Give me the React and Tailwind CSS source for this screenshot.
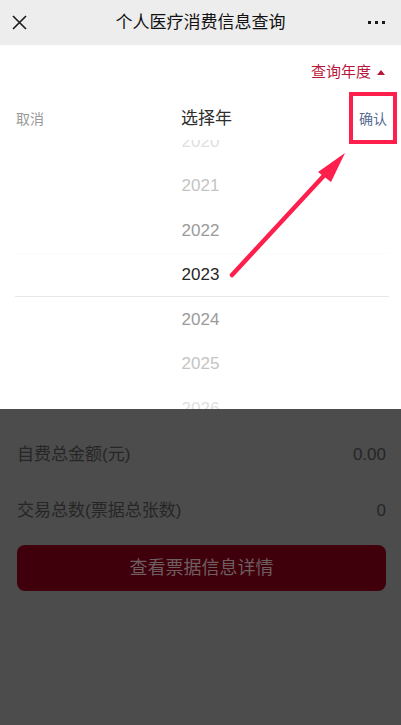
import { useState } from "react";

const years = [2020, 2021, 2022, 2023, 2024, 2025, 2026];

const yearColor = {
    0: "text-[#e0e0e0]",
    1: "text-[#c4c4c4]",
    2: "text-[#9a9a9a]",
    3: "text-[#262626]",
};

export default function App() {

    const [selected] = useState(2023);

    const selectedIndex = years.indexOf(selected);

    return (
        <div
            className="relative w-[401px] h-[725px] overflow-hidden bg-[#4c4c4c]"
            style={{ fontFamily: '"Liberation Sans", "Noto Sans CJK SC", sans-serif' }}
        >

            {/* top bar */}
            <div className="h-[45px] bg-[#ededed] flex items-center justify-between px-[12px]">
                <svg width="15" height="15" viewBox="0 0 15 15">
                    <path d="M1 1 L14 14 M14 1 L1 14" stroke="#1a1a1a" strokeWidth="1.6" />
                </svg>
                <div className="text-[17px] text-[#111] ml-[6px]">
                    个人医疗消费信息查询
                </div>
                <div className="flex items-center gap-[4px] pr-[4px]">
                    <span className="w-[3px] h-[3px] bg-[#1a1a1a]" />
                    <span className="w-[3px] h-[3px] bg-[#1a1a1a]" />
                    <span className="w-[3px] h-[3px] bg-[#1a1a1a]" />
                </div>
            </div>

            {/* white panel with picker */}
            <div className="bg-white h-[364px]">

                <div className="h-[53px] flex items-center justify-end pr-[16px] pt-[2px]">
                    <span className="text-[15px] text-[#b8173b]">查询年度</span>
                    <span className="ml-[6px] w-0 h-0 border-l-[4px] border-r-[4px] border-b-[5px] border-l-transparent border-r-transparent border-b-[#b8173b]" />
                </div>

                <div className="h-[42px] flex items-center justify-between px-[16px]">
                    <span className="text-[14px] text-[#999]">取消</span>
                    <span className="text-[17px] text-[#2e2e2e] ml-[10px]">选择年</span>
                    <span className="text-[14px] text-[#576b95] mr-[-2px]">确认</span>
                </div>

                <div className="relative h-[269px] overflow-hidden">
                    <div className="-mt-[21px]">
                        {years.map((y, i) => {
                            const d = Math.min(Math.abs(i - selectedIndex), 3);
                            return (
                                <div
                                    key={y}
                                    className={
                                        "h-[44.5px] flex items-center justify-center text-[17px] " +
                                        yearColor[3 - d]
                                    }
                                >
                                    {y}
                                </div>
                            );
                        })}
                    </div>
                    <div className="absolute left-[15px] right-[12px] top-[113px] h-[44px] border-t border-b border-t-[#fbfbfb] border-b-[#e8e8e8] pointer-events-none" />
                </div>

            </div>

            {/* dimmed page */}
            <div className="pl-[17px] pr-[15px] pt-[34px]">
                <div className="flex items-center justify-between h-[24px] text-[17px] text-[#262626]">
                    <span>自费总金额(元)</span>
                    <span>0.00</span>
                </div>
                <div className="flex items-center justify-between h-[24px] mt-[32px] text-[17px] text-[#262626]">
                    <span>交易总数(票据总张数)</span>
                    <span>0</span>
                </div>
                <div className="mt-[22px] h-[46px] rounded-[8px] bg-[#3f000b] flex items-center justify-center text-[18px] text-[#6e5e60]">
                    查看票据信息详情
                </div>
            </div>

            {/* annotation */}
            <div className="absolute left-[349px] top-[92px] w-[48px] h-[52px] border-[4px] border-[#ff1f4d]" />
            <svg className="absolute left-0 top-0 pointer-events-none" width="401" height="725">
                <line x1="232" y1="275" x2="331" y2="168" stroke="#ff1f4d" strokeWidth="4.5" strokeLinecap="round" />
                <polygon points="345,153 318,172 331,182" fill="#ff1f4d" />
            </svg>

        </div>
    );

}
